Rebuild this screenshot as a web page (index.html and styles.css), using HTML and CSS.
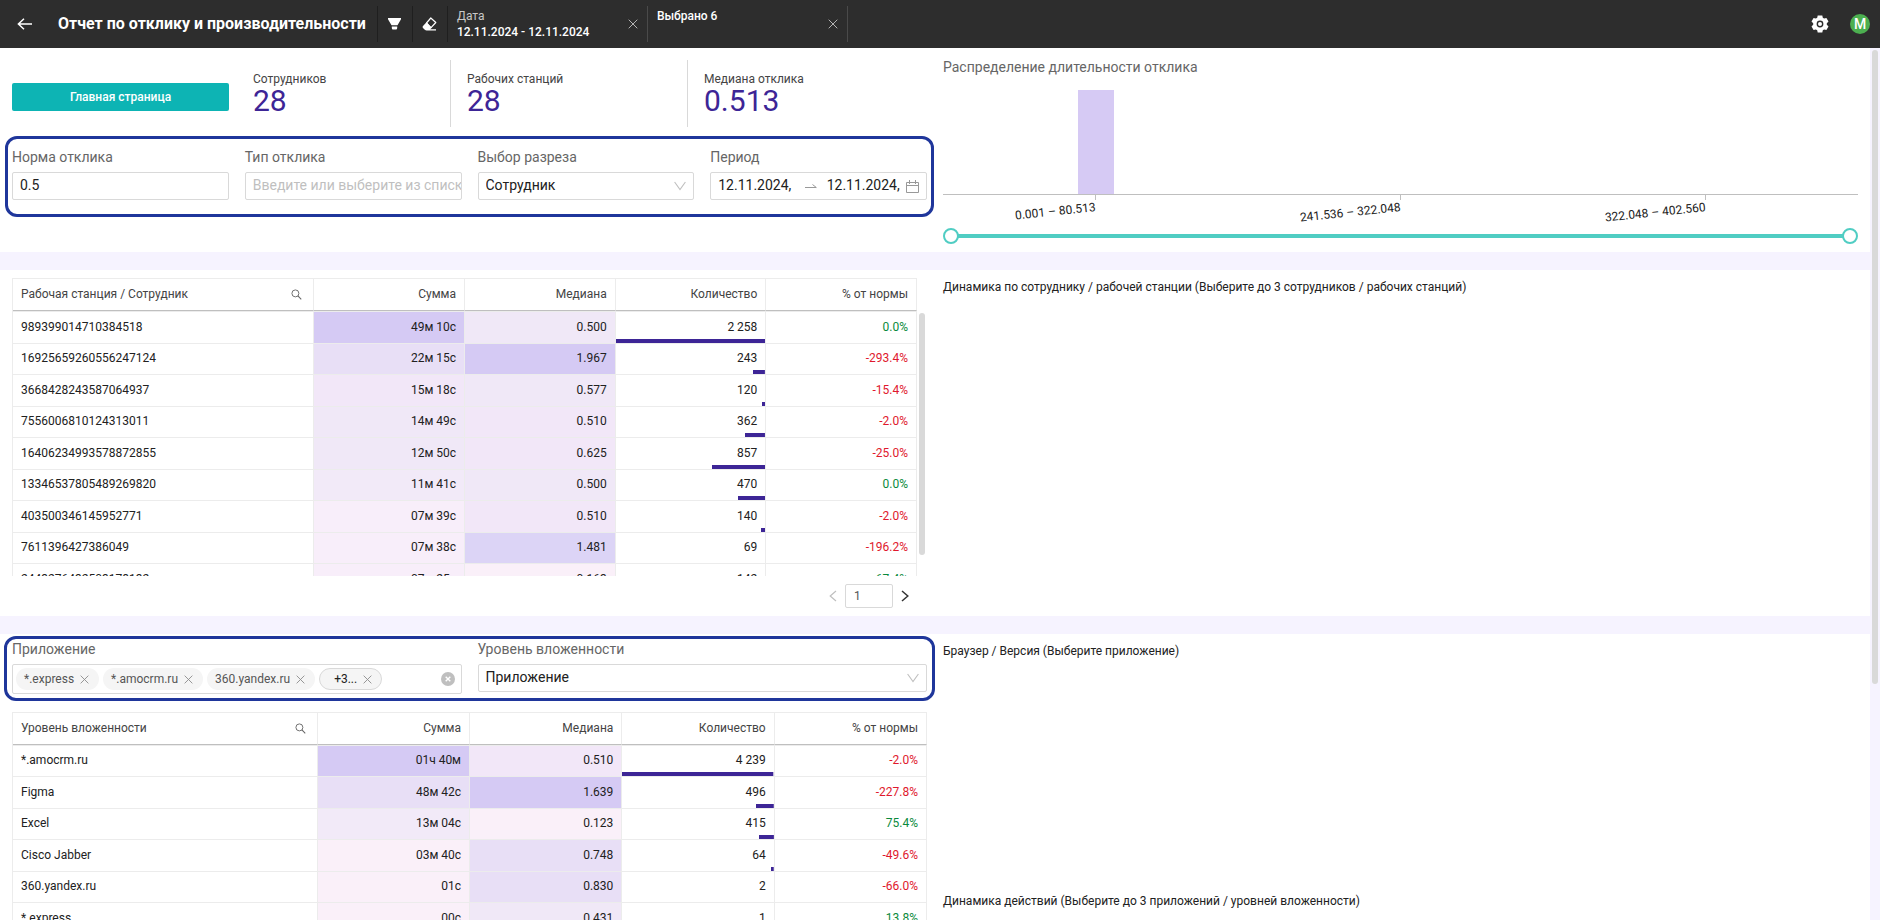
FILE: index.html
```html
<!DOCTYPE html>
<html lang="ru">
<head>
<meta charset="utf-8">
<meta name="viewport" content="width=device-width, initial-scale=1">
<title>Отчет по отклику и производительности</title>
<link rel="stylesheet" href="styles.css">
</head>
<body>
<svg class="sprite" aria-hidden="true">
  <symbol id="i-close" viewBox="0 0 10 10"><path d="M.7.7l8.6 8.6M9.3.7L.7 9.3" fill="none" stroke="currentColor"/></symbol>
  <symbol id="i-search" viewBox="0 0 12 12"><circle cx="4.8" cy="4.8" r="3.8" fill="none" stroke="currentColor"/><path d="M7.6 7.6l3.6 3.6" fill="none" stroke="currentColor" stroke-width="1.2"/></symbol>
  <symbol id="i-down" viewBox="0 0 12 10"><path d="M.6 1L6 8.6 11.4 1" fill="none" stroke="currentColor" stroke-width="1.1"/></symbol>
</svg>

<header class="topbar">
  <button class="topbar-back" aria-label="Назад"><svg width="16" height="12" viewBox="0 0 16 12"><path d="M7 .8L1.4 6 7 11.200M1.400 6H15" fill="none" stroke="currentColor" stroke-width="1.5"/></svg></button>
  <h1 class="topbar-title">Отчет по отклику и производительности</h1>
  <button class="topbar-tool" aria-label="Фильтры"><svg width="13" height="12" viewBox="0 0 13 12"><path d="M0 0h13v1.200L9.500 7.200h-6L0 1.200zM3.800 8.400h5.400V10q0 1.600-1.200 1.600H5Q3.800 11.600 3.800 10z" fill="currentColor"/></svg></button>
  <button class="topbar-tool" aria-label="Очистить"><svg width="15" height="14" viewBox="0 0 15 14"><path d="M8.800 1L13.800 5.500 8.800 10.800 4.500 6z" fill="none" stroke="currentColor" stroke-width="1.200" stroke-linejoin="round"/><path d="M4.500 5.200L9.700 10.600 8.200 12.200H14V13.600H4.600Q3.600 13.600 2.800 12.800L1 11Q0 10 1 9z" fill="currentColor"/></svg></button>
  <div class="chip">
    <div class="chip-text"><span class="chip-label">Дата</span><span class="chip-value">12.11.2024 - 12.11.2024</span></div>
    <button class="chip-close" aria-label="Сбросить дату"><svg width="10" height="10"><use href="#i-close"/></svg></button>
  </div>
  <div class="chip">
    <div class="chip-text"><span class="chip-value">Выбрано 6</span></div>
    <button class="chip-close" aria-label="Сбросить выбор"><svg width="10" height="10"><use href="#i-close"/></svg></button>
  </div>
  <div class="topbar-right">
    <button class="topbar-gear" aria-label="Настройки"><svg width="18" height="18" viewBox="0 0 18 18"><path d="M6.700 0.500h4.600l.5 2.300 1.300.8 2.300-.7 2.100 3.600-1.700 1.700v1.600l1.700 1.700-2.100 3.600-2.300-.7-1.300.8-.5 2.300H6.700l-.5-2.300-1.300-.8-2.300.7L.5 11.500l1.700-1.700V8.200L.5 6.500l2.100-3.600 2.300.7 1.300-.8z" fill="currentColor"/><circle cx="9" cy="9" r="2.700" fill="none" stroke="#2d2d2d" stroke-width="1.400"/></svg></button>
    <button class="avatar" aria-label="Профиль">M</button>
  </div>
</header>

<div class="viewport">
<main class="content">

  <section class="panel panel-summary">
    <div class="col">
      <div class="stats">
        <div class="stats-action"><button class="btn-primary">Главная страница</button></div>
        <div class="stat"><span class="stat-label">Сотрудников</span><span class="stat-value">28</span></div>
        <div class="stat"><span class="stat-label">Рабочих станций</span><span class="stat-value">28</span></div>
        <div class="stat"><span class="stat-label">Медиана отклика</span><span class="stat-value">0.513</span></div>
      </div>
      <div class="filters">
        <div class="field"><label for="norm">Норма отклика</label><input class="control" id="norm" value="0.5"></div>
        <div class="field"><label for="kind">Тип отклика</label><input class="control" id="kind" placeholder="Введите или выберите из списка"></div>
        <div class="field"><label for="cut">Выбор разреза</label>
          <div class="select"><select class="control" id="cut"><option>Сотрудник</option></select><svg class="select-arrow" width="12" height="10"><use href="#i-down"/></svg></div>
        </div>
        <div class="field"><label for="from">Период</label>
          <div class="control range">
            <input class="range-from" id="from" value="12.11.2024,">
            <svg class="range-sep" width="12" height="6" viewBox="0 0 12 6"><path d="M0 4.500H11.300L7.500 1.500" fill="none" stroke="currentColor"/></svg>
            <input class="range-to" aria-label="Конец периода" value="12.11.2024,">
            <svg width="13" height="13" viewBox="0 0 13 13"><path d="M.5 2.500h12v10H.5zM.5 5.500h12M3.500 0v4M9.500 0v4" fill="none" stroke="currentColor"/></svg>
          </div>
        </div>
      </div>
    </div>
    <div class="col">
      <h2 class="title">Распределение длительности отклика</h2>
      <div class="plot"><div class="bin"><i class="bin-bar"></i></div><div class="bin"></div><div class="bin"></div></div>
      <div class="axis"><div class="tick"><span>0.001 – 80.513</span></div><div class="tick"><span>241.536 – 322.048</span></div><div class="tick"><span>322.048 – 402.560</span></div></div>
      <div class="slider">
        <input type="range" min="0" max="403" value="0" aria-label="Минимальная длительность">
        <input type="range" min="0" max="403" value="403" aria-label="Максимальная длительность">
      </div>
    </div>
  </section>

  <section class="panel panel-stations">
    <div class="col">
      <div class="scroller">
        <table class="grid">
          <thead><tr><th><span class="th-row">Рабочая станция / Сотрудник<button aria-label="Поиск"><svg width="11" height="11"><use href="#i-search"/></svg></button></span></th><th>Сумма</th><th>Медиана</th><th>Количество</th><th>% от нормы</th></tr></thead>
          <tbody>
            <tr><td>989399014710384518</td><td class="h1">49м 10с</td><td class="h5">0.500</td><td class="bar" style="--w:100%">2 258</td><td class="up">0.0%</td></tr>
            <tr><td>16925659260556247124</td><td class="h3">22м 15с</td><td class="h1">1.967</td><td class="bar" style="--w:8%">243</td><td class="down">-293.4%</td></tr>
            <tr><td>3668428243587064937</td><td class="h4">15м 18с</td><td class="h5">0.577</td><td class="bar" style="--w:2.2%">120</td><td class="down">-15.4%</td></tr>
            <tr><td>7556006810124313011</td><td class="h5">14м 49с</td><td class="h4">0.510</td><td class="bar" style="--w:13.4%">362</td><td class="down">-2.0%</td></tr>
            <tr><td>16406234993578872855</td><td class="h5">12м 50с</td><td class="h4">0.625</td><td class="bar" style="--w:36%">857</td><td class="down">-25.0%</td></tr>
            <tr><td>13346537805489269820</td><td class="h6">11м 41с</td><td class="h5">0.500</td><td class="bar" style="--w:18.3%">470</td><td class="up">0.0%</td></tr>
            <tr><td>403500346145952771</td><td class="h7">07м 39с</td><td class="h4">0.510</td><td class="bar" style="--w:3.2%">140</td><td class="down">-2.0%</td></tr>
            <tr><td>7611396427386049</td><td class="h7">07м 38с</td><td class="h2">1.481</td><td>69</td><td class="down">-196.2%</td></tr>
            <tr><td>2443276432503178132</td><td class="h7">07м 25с</td><td class="h8">0.163</td><td class="bar" style="--w:3.3%">142</td><td class="up">67.4%</td></tr>
          </tbody>
        </table>
        <div class="rail"><i></i></div>
      </div>
      <nav class="pager" aria-label="Страницы">
        <button aria-label="Предыдущая" disabled><svg width="8" height="12" viewBox="0 0 8 12"><path d="M7 1L1.200 6 7 11" fill="none" stroke="currentColor" stroke-width="1.200"/></svg></button>
        <input aria-label="Номер страницы" value="1">
        <button aria-label="Следующая"><svg width="8" height="12" viewBox="0 0 8 12"><path d="M1 1l5.800 5L1 11" fill="none" stroke="currentColor" stroke-width="1.500"/></svg></button>
      </nav>
    </div>
    <div class="col"><h2 class="hint">Динамика по сотруднику / рабочей станции (Выберите до 3 сотрудников / рабочих станций)</h2></div>
  </section>

  <section class="panel panel-apps">
    <div class="col">
      <div class="filters filters-apps">
        <div class="field"><label for="app">Приложение</label>
          <div class="control tags">
            <span class="tag">*.express<button aria-label="Убрать *.express"><svg width="9" height="9"><use href="#i-close" width="9" height="9"/></svg></button></span>
            <span class="tag">*.amocrm.ru<button aria-label="Убрать *.amocrm.ru"><svg width="9" height="9"><use href="#i-close" width="9" height="9"/></svg></button></span>
            <span class="tag">360.yandex.ru<button aria-label="Убрать 360.yandex.ru"><svg width="9" height="9"><use href="#i-close" width="9" height="9"/></svg></button></span>
            <span class="tag tag-more">+3...<button aria-label="Убрать остальные"><svg width="9" height="9"><use href="#i-close" width="9" height="9"/></svg></button></span>
            <input id="app">
            <button class="tags-clear" aria-label="Очистить всё"><svg width="14" height="14" viewBox="0 0 14 14"><circle cx="7" cy="7" r="7" fill="#bfbfbf"/><path d="M4.700 4.700l4.600 4.600M9.300 4.700L4.700 9.300" stroke="#fff" stroke-width="1.400"/></svg></button>
          </div>
        </div>
        <div class="field"><label for="level">Уровень вложенности</label>
          <div class="select"><select class="control" id="level"><option>Приложение</option></select><svg class="select-arrow" width="12" height="10"><use href="#i-down"/></svg></div>
        </div>
      </div>
      <table class="grid">
        <thead><tr><th><span class="th-row">Уровень вложенности<button aria-label="Поиск"><svg width="11" height="11"><use href="#i-search"/></svg></button></span></th><th>Сумма</th><th>Медиана</th><th>Количество</th><th>% от нормы</th></tr></thead>
        <tbody>
          <tr><td>*.amocrm.ru</td><td class="h1">01ч 40м</td><td class="h4">0.510</td><td class="bar" style="--w:100%">4 239</td><td class="down">-2.0%</td></tr>
          <tr><td>Figma</td><td class="h3">48м 42с</td><td class="h1">1.639</td><td class="bar" style="--w:11.7%">496</td><td class="down">-227.8%</td></tr>
          <tr><td>Excel</td><td class="h6">13м 04с</td><td class="h8">0.123</td><td class="bar" style="--w:9.8%">415</td><td class="up">75.4%</td></tr>
          <tr><td>Cisco Jabber</td><td class="h8">03м 40с</td><td class="h3">0.748</td><td class="bar" style="--w:1.8%">64</td><td class="down">-49.6%</td></tr>
          <tr><td>360.yandex.ru</td><td class="h8">01с</td><td class="h3">0.830</td><td>2</td><td class="down">-66.0%</td></tr>
          <tr><td>*.express</td><td class="h8">00с</td><td class="h5">0.431</td><td>1</td><td class="up">13.8%</td></tr>
        </tbody>
      </table>
    </div>
    <div class="col">
      <div class="slot"><h2 class="hint">Браузер / Версия (Выберите приложение)</h2></div>
      <h2 class="hint">Динамика действий (Выберите до 3 приложений / уровней вложенности)</h2>
    </div>
  </section>

</main>
<div class="page-rail"><i></i></div>
</div>
</body>
</html>
```

FILE: styles.css
```css
* { box-sizing: border-box; }

body {
  margin: 0;
  height: 100vh;
  display: flex;
  flex-direction: column;
  overflow: hidden;
  background: #f6f3ff;
  color: #212121;
  font: 12px/18px Roboto, "Liberation Sans", sans-serif;
}

h1, h2 { margin: 0; font-weight: 400; }
button, input, select { font: inherit; color: inherit; }
button { border: 0; padding: 0; background: none; cursor: pointer; }
svg { display: block; flex: none; }
.sprite { position: absolute; width: 0; height: 0; }

/* Top bar */
.topbar {
  flex: none;
  height: 48px;
  display: flex;
  align-items: center;
  background: #2d2d2d;
  color: #fff;
}
.topbar-back { width: 58px; height: 48px; padding-left: 17px; }
.topbar .topbar-title { font-size: 16px; font-weight: 700; line-height: 24px; padding-right: 11px; white-space: nowrap; }
.topbar-tool {
  width: 35px;
  height: 36px;
  border-left: 1px solid #1f1f1f;
  display: grid;
  place-items: center;
}
.chip {
  width: 200px;
  height: 36px;
  display: flex;
  justify-content: space-between;
  border-right: 1px solid #4a4a4a;
}
.topbar-tool + .chip { width: 201px; border-left: 1px solid #1f1f1f; }
.chip-text { display: flex; flex-direction: column; padding: 2px 0 2px 9px; line-height: 16px; }
.chip-label { color: #c8c8c8; }
.chip-value { font-weight: 500; }
.chip-close { width: 28px; display: grid; place-items: center; color: #b4b4b4; }
.topbar-right { margin-left: auto; display: flex; align-items: center; gap: 21px; padding-right: 10px; }
.avatar {
  width: 20px;
  height: 20px;
  border-radius: 50%;
  background: #4caf50;
  font-size: 14px;
  font-weight: 500;
  line-height: 20px;
}

/* Page frame */
.viewport { flex: 1; min-height: 0; display: flex; }
.content { flex: 1; min-width: 0; display: flex; flex-direction: column; gap: 18px; overflow: hidden; }
.page-rail { width: 10px; padding: 2px; }
.page-rail i { display: block; width: 6px; height: 73%; border-radius: 3px; background: #d9d9d9; }

.panel {
  flex: none;
  display: grid;
  grid-template-columns: minmax(0, 1fr) minmax(0, 1fr);
  gap: 16px;
  padding: 8px 12px;
  background: #fff;
}
.title { font-size: 14px; line-height: 22px; color: #666; }
.hint { font-size: 12px; line-height: 18px; }

/* Summary figures */
.stats { display: grid; grid-template-columns: 217fr 221fr 237fr 240fr; padding-top: 4px; }
.stats-action { display: flex; align-items: center; padding-top: 7px; }
.btn-primary {
  width: 100%;
  height: 28px;
  border-radius: 2px;
  background: #0db4b4;
  color: #fff;
  font-weight: 500;
}
.stat { display: flex; flex-direction: column; height: 67px; padding: 12px 0 0 16px; }
.stats-action + .stat { padding-left: 24px; }
.stat + .stat { border-left: 1px solid #d9d9d9; }
.stat-label { line-height: 14px; color: #444; }
.stat-value { font-size: 30px; line-height: 30px; color: #3d2596; }

/* Filter groups */
.filters {
  display: grid;
  grid-template-columns: repeat(4, minmax(0, 1fr));
  gap: 16px;
  margin: 9px -7px 0;
  padding: 8px 4px 14px;
  border: 3px solid #1f369b;
  border-radius: 12px;
}
.filters-apps {
  grid-template-columns: repeat(2, minmax(0, 1fr));
  margin: 0 -8px 11px;
  padding: 0 5px 4px;
}
.field { display: flex; flex-direction: column; gap: 5px; }
.field label { font-size: 14px; line-height: 20px; color: #666; }
.control {
  width: 100%;
  height: 28px;
  padding: 0 0 2px 7px;
  border: 1px solid #d9d9d9;
  border-radius: 2px;
  background: #fff;
  font-size: 14px;
  outline: 0;
}
.control::placeholder { color: #bfbfbf; opacity: 1; }
.select { display: grid; align-items: center; }
.select > * { grid-area: 1 / 1; }
.select .control { appearance: none; }
.select-arrow { justify-self: end; margin-right: 8px; color: #bfbfbf; pointer-events: none; }
.range { display: flex; align-items: center; padding: 0 7px; color: #999; }
.range input {
  min-width: 0;
  width: 0;
  padding: 0 0 2px;
  border: 0;
  outline: 0;
  background: none;
  color: #212121;
}
.range-from { flex: 86 1 0; }
.range-to { flex: 79 1 0; }
.range-sep { margin-right: 10px; }

.tags { display: flex; align-items: center; gap: 4px; height: 30px; padding: 0 6px 0 3px; }
.tags input { flex: 1; min-width: 0; width: 0; padding: 0; border: 0; outline: 0; }
.tag {
  display: flex;
  align-items: center;
  gap: 6px;
  height: 22px;
  padding: 0 10px 0 8px;
  border-radius: 11px;
  background: #f5f5f5;
  color: #555;
  font-size: 12px;
  white-space: nowrap;
}
.tag button { color: #8c8c8c; }
.tag-more { padding: 0 9px 0 14px; border: 1px solid #d9d9d9; color: #212121; }

/* Distribution histogram */
.plot { display: grid; grid-template-columns: repeat(3, 1fr); height: 117px; border-bottom: 1px solid #bfbfbf; }
.bin { display: flex; align-items: flex-end; justify-content: center; }
.bin-bar { width: 36px; height: 104px; background: #d6caf4; }
.axis { display: grid; grid-template-columns: repeat(3, 1fr); height: 33px; }
.tick { width: 50%; }
.tick::before { content: ""; display: block; width: 1px; height: 5px; margin-left: auto; background: #bfbfbf; }
.tick span { display: block; text-align: right; white-space: nowrap; line-height: 14px; transform: rotate(-6deg); transform-origin: right center; }
.slider { display: grid; align-items: center; height: 16px; background: linear-gradient(#50cdc3, #50cdc3) center / calc(100% - 16px) 4px no-repeat; }
.slider input { grid-area: 1 / 1; appearance: none; width: 100%; height: 16px; margin: 0; background: none; pointer-events: none; }
.slider input::-webkit-slider-thumb {
  appearance: none;
  width: 16px;
  height: 16px;
  border: 2px solid #50cdc3;
  border-radius: 50%;
  background: #fff;
  pointer-events: auto;
}

/* Data tables */
.scroller { display: flex; height: 298px; overflow: hidden; }
.rail { flex: none; width: 10px; padding: 35px 2px 0; }
.rail i { display: block; width: 6px; height: 242px; border-radius: 3px; background: #d9d9d9; }
.grid {
  width: 100%;
  table-layout: fixed;
  border-collapse: separate;
  border-spacing: 0;
  border-left: 1px solid #ececec;
}
.scroller .grid { flex: 1; min-width: 0; width: auto; align-self: flex-start; }
.grid th, .grid td { padding: 0 8px 2px; text-align: right; border-right: 1px solid #ececec; border-bottom: 1px solid #ececec; white-space: nowrap; }
.grid th { width: 16.66%; height: 33px; font-weight: 400; color: #444; border-top: 1px solid #ececec; border-bottom-color: #bfbfbf; }
.grid th:first-child { width: 33.33%; }
.grid th:first-child, .grid td:first-child { text-align: left; }
.th-row { display: flex; align-items: center; justify-content: space-between; padding-right: 3px; }
.th-row button { padding-top: 2px; color: #666; }
.grid td { height: 32px; }
.grid tbody tr:first-child td { border-top: 1px solid #ececec; }
.panel-stations tbody tr:first-child td { height: 33px; }
.panel-stations tbody tr:nth-child(even) td { height: 31px; }
.panel-apps tbody tr:nth-child(odd):not(:first-child) td { height: 31px; }
.grid .up { color: #0a8a3c; }
.grid .down { color: #e0182d; }
.bar { background: linear-gradient(#3d2596, #3d2596) right bottom / var(--w) 4px no-repeat; }
.h1 { background: #d5caf4; }
.h2 { background: #dcd4f6; }
.h3 { background: #e8dff6; }
.h4 { background: #f2e7f8; }
.h5 { background: #f0e8f7; }
.h6 { background: #f2eaf8; }
.h7 { background: #f8eefa; }
.h8 { background: #faf0f9; }

.pager { display: flex; align-items: center; justify-content: flex-end; gap: 8px; padding: 8px 18px 0 0; }
.pager button { color: #333; }
.pager button:disabled { color: #bfbfbf; }
.pager input { width: 48px; height: 24px; padding: 0 8px; border: 1px solid #d9d9d9; border-radius: 2px; outline: 0; color: #555; }

.panel-apps .col:first-child { margin-top: -6px; }
.slot { min-height: 250px; }
```
